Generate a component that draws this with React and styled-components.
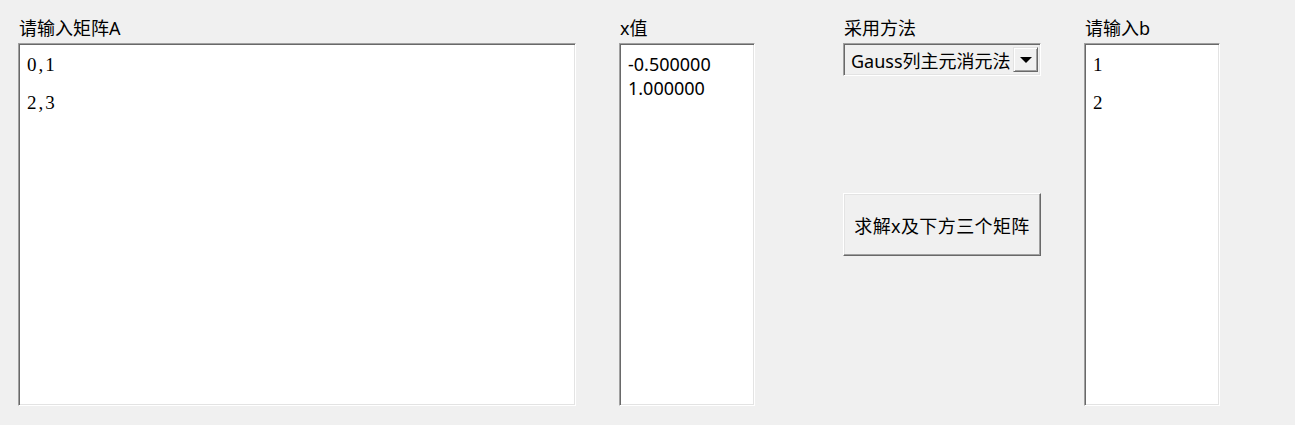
import React from 'react';
import styled, { createGlobalStyle } from 'styled-components';

const GlobalStyle = createGlobalStyle`
  html, body {
    margin: 0;
    padding: 0;
    background: #f0f0f0;
  }
  body {
    font-family: "Noto Sans", "Noto Sans CJK SC", sans-serif;
    color: #000;
  }
`;

const Page = styled.div`
  display: flex;
  align-items: flex-start;
  padding: 17px 0 0 18px;
  height: 425px;
  box-sizing: border-box;
`;

const Column = styled.div`
  display: flex;
  flex-direction: column;
  width: ${(p) => p.width}px;
  margin-right: ${(p) => p.gap || 0}px;
`;

const Label = styled.div`
  height: 26px;
  padding-left: 1px;
  font-size: 18px;
  line-height: 22px;
  white-space: nowrap;
`;

const Sunken = styled.textarea`
  display: block;
  width: 100%;
  height: 363px;
  margin: 0;
  box-sizing: border-box;
  resize: none;
  overflow: hidden;
  background: #fff;
  border: 1px solid;
  border-color: #a0a0a0 #fff #fff #a0a0a0;
  box-shadow: inset 1px 1px #696969, inset -1px -1px #e3e3e3;
  outline: none;
  color: #000;
  font-family: ${(p) => (p.serif ? '"Liberation Serif", serif' : '"Noto Sans", "Noto Sans CJK SC", sans-serif')};
  font-size: ${(p) => (p.serif ? 19 : 18)}px;
  letter-spacing: ${(p) => (p.serif ? '2px' : '0')};
  line-height: ${(p) => (p.serif ? 19 : 24)}px;
  padding: ${(p) => (p.serif ? '11px 8px' : '8px 8px')};
`;

const Select = styled.div`
  display: flex;
  align-items: center;
  justify-content: space-between;
  height: 33px;
  box-sizing: border-box;
  border: 1px solid;
  border-color: #a0a0a0 #fff #fff #a0a0a0;
  box-shadow: inset 1px 1px #696969, inset -1px -1px #e3e3e3;
  padding: 0 2px 0 7px;
  font-size: 18px;
  white-space: nowrap;
`;

const ArrowButton = styled.div`
  display: flex;
  align-items: center;
  justify-content: center;
  width: 25px;
  height: 25px;
  box-sizing: border-box;
  background: #f0f0f0;
  border: 1px solid;
  border-color: #e3e3e3 #696969 #696969 #e3e3e3;
  box-shadow: inset 1px 1px #fff, inset -1px -1px #a0a0a0;
`;

const Arrow = styled.span`
  width: 0;
  height: 0;
  border-left: 6px solid transparent;
  border-right: 6px solid transparent;
  border-top: 6px solid #000;
`;

const SolveButton = styled.button`
  margin-top: 117px;
  height: 63px;
  width: 100%;
  padding: 0;
  background: #f0f0f0;
  border: 1px solid;
  border-color: #fff #696969 #696969 #fff;
  box-shadow: inset -1px -1px #a0a0a0, inset 1px 1px #e3e3e3;
  font-family: "Noto Sans", "Noto Sans CJK SC", sans-serif;
  font-size: 18px;
  letter-spacing: 0.4px;
  color: #000;
  cursor: pointer;
`;

export default function App() {
  return (
    <>
      <GlobalStyle />
      <Page>
        <Column width={558} gap={43}>
          <Label>请输入矩阵A</Label>
          <Sunken serif defaultValue={'0,1\n\n2,3'} />
        </Column>
        <Column width={136} gap={88}>
          <Label>x值</Label>
          <Sunken defaultValue={'-0.500000\n1.000000'} />
        </Column>
        <Column width={198} gap={43}>
          <Label>采用方法</Label>
          <Select>
            <span>Gauss列主元消元法</span>
            <ArrowButton>
              <Arrow />
            </ArrowButton>
          </Select>
          <SolveButton>求解x及下方三个矩阵</SolveButton>
        </Column>
        <Column width={136}>
          <Label>请输入b</Label>
          <Sunken serif defaultValue={'1\n\n2'} />
        </Column>
      </Page>
    </>
  );
}
